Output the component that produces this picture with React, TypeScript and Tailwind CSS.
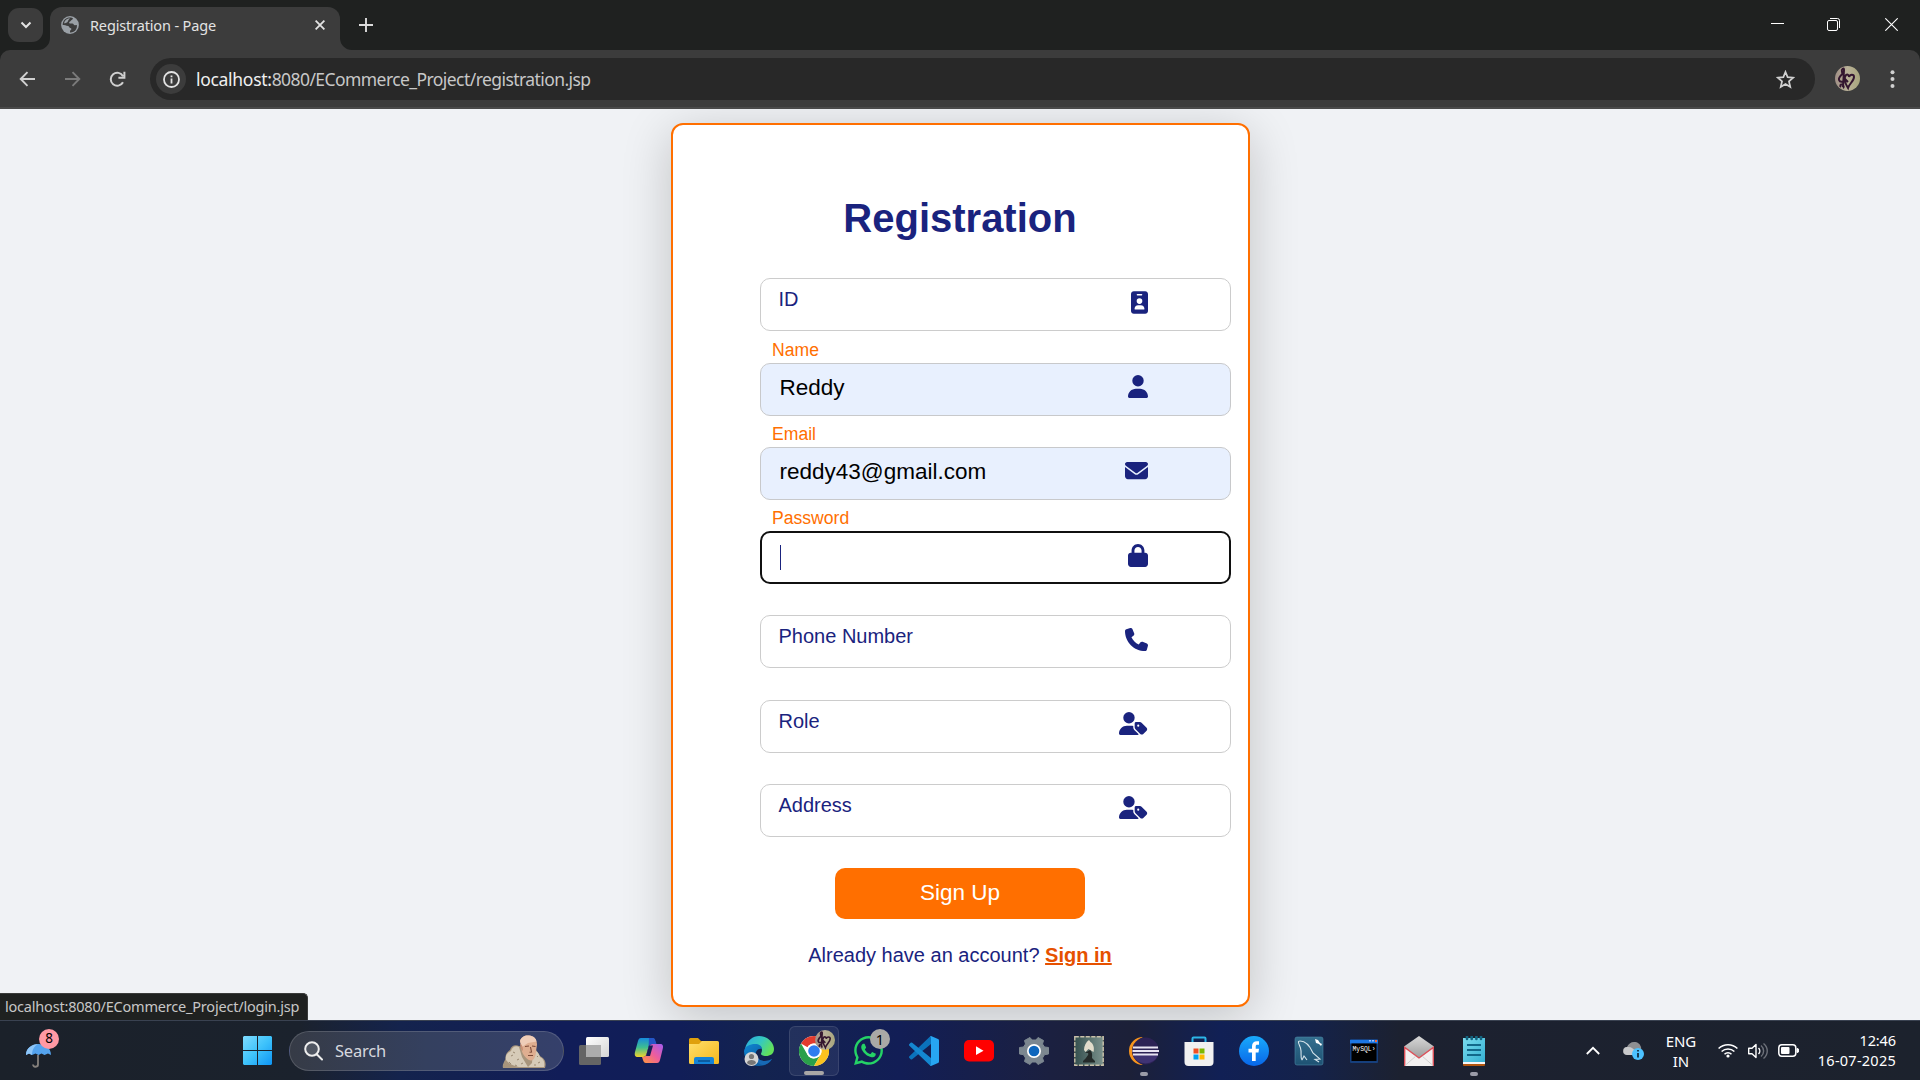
import React from "react";
import { FaIdBadge, FaUser, FaEnvelope, FaLock, FaPhone, FaUserTag, FaWhatsapp } from "react-icons/fa6";

const UI = "font-['Noto_Sans','Open_Sans',sans-serif]";

type Field = { label: string; value?: string; state: "empty" | "filled" | "focus"; Icon: React.ComponentType<{ className?: string }>; iconWidth: string };

const fields: Field[] = [
  { label: "ID", state: "empty", Icon: FaIdBadge, iconWidth: "w-[17px]" },
  { label: "Name", value: "Reddy", state: "filled", Icon: FaUser, iconWidth: "w-[20px]" },
  { label: "Email", value: "reddy43@gmail.com", state: "filled", Icon: FaEnvelope, iconWidth: "w-[23px]" },
  { label: "Password", state: "focus", Icon: FaLock, iconWidth: "w-[20px]" },
  { label: "Phone Number", state: "empty", Icon: FaPhone, iconWidth: "w-[23px]" },
  { label: "Role", state: "empty", Icon: FaUserTag, iconWidth: "w-[28.500px]" },
  { label: "Address", state: "empty", Icon: FaUserTag, iconWidth: "w-[28.500px]" },
];

function TabStrip() {
  return (
    <div className="flex h-[50px] shrink-0 items-start bg-[#1f2120] pl-2">
      <div className="mt-2 flex h-[34px] w-[35px] items-center justify-center rounded-[11px] bg-[#3c3c3c]">
        <svg width="12" height="8" viewBox="0 0 12 8" fill="none" stroke="#e3e3e3" strokeWidth="2"><path d="M1.5 1.5 6 6l4.500-4.500" /></svg>
      </div>
      <div className="relative ml-[7px] mt-[7px] flex h-[43px] w-[290px] items-center rounded-t-[12px] bg-[#3c3c3c] pb-[7px]">
        <svg className="absolute -left-3 bottom-0" width="12" height="12"><path d="M12 0v12H0A12 12 0 0 0 12 0z" fill="#3c3c3c" /></svg>
        <svg className="absolute -right-3 bottom-0" width="12" height="12"><path d="M0 0v12h12A12 12 0 0 1 0 0z" fill="#3c3c3c" /></svg>
        <svg className="ml-[11px]" width="18" height="18" viewBox="0 0 18 18">
          <circle cx="9" cy="9" r="8.900" fill="#9aa0a6" />
          <path d="M8 1.600c2-.3 3 .2 4 .8-.2 1.500-1.800 1-2.200 2.400-.3 1-1.600.6-1.700 1.900 0 .9 2.200.8 3.200.8 1.300 0 1.200 1.700 2.600 1.700l2-.3c.4 3-1 5.600-3.400 6.900-1.300.7-2.400.6-3.500.6.200-1.500-.3-1.900.8-2.500 1-.6.700-1.800-.6-2-1-.1-.8-1.600-2-2C5 9.400 3.500 9 1.700 8.900 1.700 4.800 4.600 2.200 8 1.600z" fill="#3c3c3c" />
          <path d="M3.200 6.200C4.500 3.600 6.600 2.300 9 2.200L7.500 4 6.400 6.300 3.500 7.400z" fill="#9aa0a6" />
        </svg>
        <span className="ml-[11px] mt-[1px] whitespace-nowrap text-[14.500px] tracking-[-0.15px] text-[#e3e3e3]">Registration - Page</span>
        <svg className="absolute left-[265px] top-[13px]" width="10" height="10" stroke="#e3e3e3" strokeWidth="1.800"><path d="M.6.6l8.800 8.800M9.400.6.6 9.400" /></svg>
      </div>
      <svg className="ml-[19px] mt-[18px]" width="14" height="14" stroke="#dcdcdc" strokeWidth="1.900"><path d="M7 0v14M0 7h14" /></svg>
      <div className="ml-auto flex pr-[22px] pt-[18px]">
        <svg width="13" height="13" stroke="#fff"><path d="M0 5.500h13" /></svg>
        <svg className="ml-[43px]" width="13" height="13" fill="none" stroke="#fff"><path d="M.5 4a1.500 1.500 0 0 1 1.500-1.500h7a1.500 1.500 0 0 1 1.500 1.500v7a1.500 1.500 0 0 1-1.500 1.500H2A1.500 1.500 0 0 1 .5 11zM3 .5h7.500a2 2 0 0 1 2 2V10" /></svg>
        <svg className="ml-[45px]" width="13" height="13" stroke="#fff" strokeWidth="1.100"><path d="M.3.300l12.400 12.400M12.700.300.300 12.700" /></svg>
      </div>
    </div>
  );
}

function Toolbar() {
  return (
    <div className="flex h-[59px] shrink-0 bg-[#1f2120]">
      <div className="flex w-full items-start rounded-t-[10px] border-b-2 border-[#4a4a4a] bg-[#3c3c3c] pl-[19px] pt-2">
        <div className="flex h-[42px] items-center">
          <svg width="17" height="16" viewBox="0 0 17 16" fill="none" stroke="#d0d0d0" strokeWidth="1.900"><path d="M16 8H2M8.500 1.200 1.700 8l6.800 6.800" /></svg>
          <svg className="ml-[28px]" width="17" height="16" viewBox="0 0 17 16" fill="none" stroke="#7b7b7b" strokeWidth="1.900"><path d="M1 8h14M8.500 1.200 15.300 8l-6.800 6.800" /></svg>
          <svg className="ml-[28px]" width="17" height="17" viewBox="0 0 17 17" fill="none" stroke="#d0d0d0" strokeWidth="2"><path d="M14 11.300A6.500 6.500 0 1 1 14 5.200M15.400 .8v6H9.400" /></svg>
        </div>
        <div className="ml-6 flex h-[42px] w-[1665px] items-center rounded-full bg-[#282828] pl-[6px] pr-5">
          <div className="flex size-[30px] items-center justify-center rounded-full bg-[#3c3c3c]">
            <svg width="17" height="17" viewBox="0 0 17 17" fill="none" stroke="#e3e3e3" strokeWidth="1.800"><circle cx="8.500" cy="8.500" r="7.500" /><path d="M8.500 7.500v5M8.500 4.400v1.900" /></svg>
          </div>
          <span className="ml-[10px] mt-[1px] whitespace-nowrap text-[17.500px] tracking-[-0.57px] text-[#c7c7c7]"><span className="tracking-[-0.3px] text-[#f0f0f0]">localhost:</span>8080/ECommerce_Project/registration.jsp</span>
          <svg className="ml-auto" width="19" height="19" viewBox="0 0 24 24" fill="none" stroke="#d0d0d0" strokeWidth="2.200"><path d="m12 2.500 2.700 6.600 7 .6-5.300 4.700 1.600 7L12 17.600l-6 3.800 1.600-7L2.300 9.700l7-.6z" /></svg>
        </div>
        <Avatar className="ml-5 mt-[8px]" size={25} />
        <svg className="ml-[30px] mt-[12px]" width="5" height="18" fill="#d0d0d0"><circle cx="2.500" cy="2.200" r="2" /><circle cx="2.500" cy="9" r="2" /><circle cx="2.500" cy="16" r="2" /></svg>
      </div>
    </div>
  );
}

function Avatar({ size, className }: { size: number; className?: string }) {
  return (
    <svg className={className} width={size} height={size} viewBox="0 0 25 25">
      <defs><linearGradient id="av"><stop stopColor="#a08f86" /><stop offset=".5" stopColor="#b9b198" /><stop offset="1" stopColor="#a8a67c" /></linearGradient></defs>
      <circle cx="12.500" cy="12.500" r="12.500" fill="url(#av)" />
      <path d="M6 21c-1.500-1-.5-3 1-2.500 2 .5 2 3 1 3.500M8 21 9 4c.3-3-3-1-2 2 .5 2 3 4 3 7s-5 4-6 1 4-6 5-8M13 22C10 17 8 12 11 9c2-1.500 3 1 3 2 1-3 5-3 5 0 0 4-5 7-6 11zM9 12l4 4" fill="none" stroke="#34162f" strokeWidth="2" />
    </svg>
  );
}

function FormField({ label, value, state, Icon, iconWidth }: Field) {
  const floating = state !== "empty";
  return (
    <div className="relative h-[84.280px] w-[471px]">
      <div
        className={
          "flex h-[53px] rounded-[10px] pl-[19px] pt-[11px] text-[22.500px] leading-[26px] text-black " +
          (state === "focus" ? "border-2 border-[#101010] bg-white" : state === "filled" ? "border border-[#c8c9cb] bg-[#e8f0fe]" : "border border-[#ccc] bg-white")
        }
      >
        {value}
        {state === "focus" && <span className="-ml-px mt-[1px] h-[25px] w-px bg-[#1a237e]" />}
      </div>
      <label className={"absolute whitespace-nowrap " + (floating ? "-top-[23px] left-[12.500px] text-[17.600px] leading-[21px] text-[#ff6f00]" : "left-[19px] top-[10px] text-[20px] leading-[23px] text-[#1a237e]")}>{label}</label>
      <span className="absolute right-[83px] top-[12.500px] text-[#1a237e]">
        <Icon className={"block h-[23px] " + iconWidth} />
      </span>
    </div>
  );
}

function Page() {
  return (
    <main className="relative flex flex-1 items-start justify-center overflow-hidden bg-[#f0f2f5] font-['Liberation_Sans',Arial,sans-serif]">
      <section className="mt-[14px] flex h-[884px] w-[579px] flex-col items-center rounded-[12px] border-2 border-[#ff6f00] bg-white shadow-[0_10px_50px_rgba(0,0,0,0.2)]">
        <h1 className="mt-[70px] text-[40px] font-bold leading-[46px] text-[#1a237e]">Registration</h1>
        <form className="ml-[70px] mt-[37.300px] flex flex-col">
          {fields.map((f) => (
            <FormField key={f.label} {...f} />
          ))}
        </form>
        <button type="button" className="h-[51px] w-[250px] shrink-0 rounded-[10px] bg-[#ff6f00] pb-[1.500px] text-[22.500px] leading-[26px] text-white">Sign Up</button>
        <p className="mt-[25px] text-[20px] leading-[23px] text-[#1a237e]">
          Already have an account? <a className="font-bold text-[#e65100] underline">Sign in</a>
        </p>
      </section>
      <div className={"absolute bottom-0 left-0 flex h-[27px] w-[308px] items-center whitespace-nowrap rounded-tr-[5px] border-r border-t border-[#3a3b3a] bg-[#1f2120] pl-[5px] text-[14.500px] tracking-[-0.2px] text-[#c7c7c7] " + UI}>
        localhost:8080/ECommerce_Project/login.jsp
      </div>
    </main>
  );
}

const TaskView = () => (
  <svg width="30" height="30" viewBox="0 0 30 30">
    <defs><linearGradient id="tv" x2="1" y2="1"><stop stopColor="#fff" /><stop offset="1" stopColor="#d5d5d5" /></linearGradient></defs>
    <rect y="9" width="22" height="20" rx="1.500" fill="#656565" /><rect x="7" y="1" width="23" height="20" rx="1.500" fill="url(#tv)" /><path d="M7 9h15v12H8a1 1 0 0 1-1-1z" fill="#adadad" />
  </svg>
);
const Copilot = () => (
  <svg width="30" height="30" viewBox="0 0 30 30">
    <defs>
      <linearGradient id="c1" x2="0" y2="1"><stop stopColor="#168bdd" /><stop offset=".5" stopColor="#3fbf8f" /><stop offset="1" stopColor="#f2d32b" /></linearGradient>
      <linearGradient id="c2" x1="1" x2="0" y2="1"><stop stopColor="#a45cf0" /><stop offset=".5" stopColor="#ee5d9c" /><stop offset="1" stopColor="#ff9a3c" /></linearGradient>
    </defs>
    <path d="M7 2h11c2 0 2.500 1.500 3 3l1 3h-4c-2 0-3 1-3.500 3l-2 7c-.6 2-1.500 3-3.500 3H4c-3 0-3.700-2-3-5L4 5c.6-2 1.300-3 3-3z" fill="url(#c1)" />
    <path d="M23 27H12c-2 0-2.500-1.500-3-3l-1-3c3 0 4-1 4.600-3l2.200-7c.6-2 1.500-3 3.500-3H26c3 0 3.500 2 2.700 5L26 24c-.6 2-1.300 3-3 3z" fill="url(#c2)" />
    <path d="M15 2h4c1.500 0 2 1 2.500 3l1 3h-4c-2 0-3 1-4 3z" fill="#2455c7" />
    <path d="M15 9.500h4l-3 10.500h-4z" fill="#142058" />
  </svg>
);
const Folder = () => (
  <svg width="30" height="30" viewBox="0 0 30 30">
    <defs><linearGradient id="fo" x2="1" y2="1"><stop stopColor="#ffdf6b" /><stop offset="1" stopColor="#f5b81c" /></linearGradient></defs>
    <path d="M0 3.500A1.500 1.500 0 0 1 1.500 2H9l3 3h16v8H0z" fill="#dfa00c" /><path d="M0 8h10l3-3h15.500A1.500 1.500 0 0 1 30 6.500v20a1.500 1.500 0 0 1-1.500 1.500h-27A1.500 1.500 0 0 1 0 26.500z" fill="url(#fo)" />
    <path d="M5 28v-5a2 2 0 0 1 2-2h16a2 2 0 0 1 2 2v5z" fill="#1483d8" /><path d="M9 25h12" stroke="#0a4f8e" strokeWidth="1.500" />
  </svg>
);
const Edge = () => (
  <svg width="30" height="30" viewBox="0 0 30 30">
    <defs>
      <linearGradient id="e1" x2="1" y2=".5"><stop stopColor="#2aa7e0" /><stop offset=".55" stopColor="#35c9c0" /><stop offset="1" stopColor="#62e05a" /></linearGradient>
      <linearGradient id="e2" x2="1" y2="1"><stop stopColor="#0f86d2" /><stop offset="1" stopColor="#0b4e92" /></linearGradient>
    </defs>
    <path d="M1 13C3 4 9 0 15 0c9 0 15 7 15 13 0 5-4 7-8 7-3 0-5-1-5-2s1-2 1-4c0-3-3-5-7-5-5 0-8 2-10 4z" fill="url(#e1)" />
    <path d="M0 15C1 10 6 8 11 8c4 0 7 2 7 5-2-1-5 0-6 3-1 5 3 9 9 9 3 0 5-1 7-2-3 5-8 7-13 7C6 30 0 23 0 15z" fill="url(#e2)" />
    <path d="M12 16c-1 5 3 9 9 9 3 0 5-1 7-2-2 3-4 5-8 6-6 0-11-6-8-13z" fill="#1769b5" />
    <circle cx="7.500" cy="23" r="7" fill="#d5d5d5" /><circle cx="7.500" cy="20.500" r="2.600" fill="#777" /><path d="M3 27c0-4 9-4 9 0-2 2.500-7 2.500-9 0z" fill="#777" />
  </svg>
);
const Chrome = () => (
  <div className="relative">
    <svg width="30" height="30" viewBox="0 0 30 30">
      <circle cx="15" cy="15" r="15" fill="#fff" />
      <path d="M15 0a15 15 0 0 1 13 7.500H15a7.500 7.500 0 0 0-6.500 3.750L2 7.500A15 15 0 0 1 15 0z" fill="#e23b2e" />
      <path d="M2 7.500 8.500 18.750A7.500 7.500 0 0 0 15 22.500l6.500-3.750L15 30A15 15 0 0 1 2 7.500z" fill="#2aa04a" />
      <path d="M28 7.500A15 15 0 0 1 15 30l6.500-11.250a7.500 7.500 0 0 0 0-7.500L15 7.500z" fill="#fcc31e" />
      <circle cx="15" cy="15" r="7.500" fill="#fff" /><circle cx="15" cy="15" r="5.800" fill="#2f7cf0" />
    </svg>
    <Avatar className="absolute -right-[6px] -top-[6px]" size={20} />
  </div>
);
const WhatsApp = () => (
  <div className="relative">
    <FaWhatsapp size={33} color="#25d366" />
    <span className={"absolute -right-[5px] -top-[5px] flex size-[20px] items-center justify-center rounded-full bg-[#aaa9a6] text-[14.500px] leading-none text-black " + UI}>1</span>
  </div>
);
const VSCode = () => (
  <svg width="30" height="30" viewBox="0 0 30 30">
    <path d="M22 0v8L3.200 23.200a1.300 1.300 0 0 1-1.600 0L.4 22a1.200 1.200 0 0 1 0-1.800L20.500 1z" fill="#0b72bb" />
    <path d="M22 30v-8L3.200 6.800a1.300 1.300 0 0 0-1.600 0L.4 8a1.200 1.200 0 0 0 0 1.800L20.500 29z" fill="#1487d0" />
    <path d="M22 0l7 3a1.600 1.600 0 0 1 1 1.500v21a1.600 1.600 0 0 1-1 1.500l-7 3-1.500-1c1 .5 1.500 0 1.500-1.500v-25C22 1 21.500.5 20.500 1z" fill="#27a6f2" />
  </svg>
);
const YouTube = () => (
  <svg width="30" height="30" viewBox="0 0 30 30"><rect y="4" width="30" height="21.500" rx="5" fill="#f00" /><path d="M12 10.300v8.800l7.500-4.400z" fill="#fff" /></svg>
);
const Settings = () => (
  <svg width="30" height="30" viewBox="0 0 30 30">
    <path d="M11 1.500 13 4h4l2-2.500 5.500 3-1 3.500 2 3 4 .5v6.500l-4 .7-2 3.300 1.200 3.500-5.700 3L17 26h-4l-2 2.500-5.500-3L6.500 22l-2-3.300L.5 18v-6.500l4-.5 2-3-1-3.500z" fill="#7c8790" stroke="#7c8790" strokeLinejoin="round" />
    <circle cx="15" cy="15" r="7" fill="#fff" /><circle cx="15" cy="15" r="5.300" fill="#0e66bd" />
  </svg>
);
const Chess = () => (
  <svg width="30" height="30" viewBox="0 0 30 30">
    <defs><linearGradient id="ch" x2="1"><stop stopColor="#35504f" /><stop offset="1" stopColor="#7b918c" /></linearGradient></defs>
    <rect width="30" height="30" fill="#4a4a42" /><rect x=".8" y=".8" width="28.400" height="28.400" fill="url(#ch)" stroke="#c9c1ab" strokeWidth="1.400" strokeDasharray="4 1.500" />
    <path d="M10 14c0-4 2-8 5-10l1.500 2c3 2 4 6 3 10l-5-3-3 3z" fill="#e2dccb" /><path d="M11 17l5-3c3 3 2 6 2 8l3 3v1.500H9V25l3-3c1-2 3-3 2-5z" fill="#242a29" />
  </svg>
);
const Eclipse = () => (
  <svg width="30" height="30" viewBox="0 0 30 30">
    <path d="M14 1A14 14 0 1 0 14 29 15 15 0 0 1 14 1z" fill="#f7941e" /><circle cx="16.500" cy="15" r="13.500" fill="#2c2255" /><path d="M4 19h25a13.500 13.500 0 0 1-25 0z" fill="#3f3373" />
    <path d="M4 11.500h25M3.500 15h26.500M4 18.500h25" stroke="#e8e4f2" strokeWidth="2" />
  </svg>
);
const Store = () => (
  <svg width="30" height="30" viewBox="0 0 30 30">
    <path d="M8.500 8V2.500a1 1 0 0 1 1-1h11a1 1 0 0 1 1 1V8" fill="none" stroke="#2cb5e8" strokeWidth="2" /><path d="M.5 6h29v20a4 4 0 0 1-4 4h-21a4 4 0 0 1-4-4z" fill="#f1f1f1" />
    <path d="M9.500 12.500h5v5h-5z" fill="#f05023" /><path d="M15.500 12.500h5v5h-5z" fill="#7cb800" /><path d="M9.500 18.500h5v5h-5z" fill="#00a1f1" /><path d="M15.500 18.500h5v5h-5z" fill="#fdb900" />
  </svg>
);
const Facebook = () => (
  <svg width="30" height="30" viewBox="0 0 30 30">
    <defs><linearGradient id="fb" x2="0" y2="1"><stop stopColor="#19aafc" /><stop offset="1" stopColor="#0866e8" /></linearGradient></defs>
    <circle cx="15" cy="15" r="15" fill="url(#fb)" /><path d="M13 25v-8.500H9.500v-3.700H13v-2.500C13 7 15 5.300 18 5.300h2v3.400h-1.700c-1.300 0-1.600.7-1.600 1.700v2.400H20l-.5 3.700h-2.800V25z" fill="#fff" />
  </svg>
);
const Workbench = () => (
  <svg width="30" height="30" viewBox="0 0 30 30">
    <defs><linearGradient id="wb" x2="0" y2="1"><stop stopColor="#34708f" /><stop offset="1" stopColor="#1e5273" /></linearGradient></defs>
    <rect x="1" y="1" width="28" height="28" rx="2" fill="url(#wb)" stroke="#4b87a5" strokeWidth=".6" />
    <path d="M8 24C6 21 8 17 6.500 12 5 8 3 5 6 5c6 0 10 5 13 12l7 6-5 .5 4 2.500M8 24l2-4 3 4" fill="none" stroke="#d5e4eb" strokeWidth="1.100" /><path d="m21 3 3 1 2 3 2 1-1 2-2-2-3-1z" fill="#fff" />
  </svg>
);
const MySql = () => (
  <svg width="30" height="30" viewBox="0 0 30 30">
    <rect x="1" y="3" width="28" height="24" rx="1" fill="#163f7c" /><path d="M1 4h28v3.500H1z" fill="#1c77e4" /><path d="M20 4.700h2M23 4.700h2" stroke="#9cc4ff" strokeWidth="1.500" /><path d="M26 5h2" stroke="#f26b3a" strokeWidth="2" /><path d="M2.500 7.500h25V25h-25z" />
    <text x="3.500" y="15" fontSize="6.800" fill="#fff" fontFamily="Liberation Mono" textLength="23" lengthAdjust="spacingAndGlyphs">MySQL›</text>
  </svg>
);
const Mail = () => (
  <svg width="30" height="30" viewBox="0 0 30 30">
    <defs><linearGradient id="ml" x2="0" y2="1"><stop stopColor="#d8d8d8" /><stop offset="1" stopColor="#9b9b9b" /></linearGradient></defs>
    <path d="M0 10.500 15 0l15 10.500V14L15 23 0 14z" fill="url(#ml)" /><path d="M0 11v19h30V11L15 22z" fill="#f2f0f0" /><path d="M.7 30V11.500L15 22l14.300-10.500V30" fill="none" stroke="#dd5059" strokeWidth="1.400" /><path d="M1 29.500 12 20M29 29.500 18 20" stroke="#cfcfcf" />
  </svg>
);
const Notepad = () => (
  <svg width="30" height="30" viewBox="0 0 30 30">
    <defs><linearGradient id="np" x2="1" y2="1"><stop stopColor="#7adcee" /><stop offset="1" stopColor="#34b0d2" /></linearGradient></defs>
    <path d="M4 26h22v3a1 1 0 0 1-1 1H5a1 1 0 0 1-1-1z" fill="#b3560f" /><path d="M4 2h22v24H4z" fill="url(#np)" /><path d="M4 26h22v2H4z" fill="#f6f6f6" />
    <path d="M8 0v3M12.700 0v3M17.400 0v3M22 0v3" stroke="#13647f" strokeWidth="2.600" strokeLinecap="round" /><path d="M8 9h14M8 14h14M8 19h14" stroke="#12688a" strokeWidth="1.800" />
  </svg>
);

const apps: { name: string; Icon: () => React.ReactElement; active?: boolean; running?: boolean }[] = [
  { name: "Task view", Icon: TaskView },
  { name: "Copilot", Icon: Copilot },
  { name: "Explorer", Icon: Folder },
  { name: "Edge", Icon: Edge },
  { name: "Chrome", Icon: Chrome, active: true },
  { name: "WhatsApp", Icon: WhatsApp },
  { name: "VS Code", Icon: VSCode },
  { name: "YouTube", Icon: YouTube },
  { name: "Settings", Icon: Settings },
  { name: "Chess", Icon: Chess },
  { name: "Eclipse", Icon: Eclipse, running: true },
  { name: "Store", Icon: Store },
  { name: "Facebook", Icon: Facebook },
  { name: "Workbench", Icon: Workbench },
  { name: "MySQL", Icon: MySql },
  { name: "Mail", Icon: Mail },
  { name: "Notepad", Icon: Notepad, running: true },
];

function SearchPortrait() {
  return (
    <svg width="44" height="33" viewBox="0 0 44 33">
      <path d="M1 33c-1-3 1-6 2.500-9C3 20 5 17 8 15c1-4 5-6 9-4l14 3c4 0 5 4 7 7 4 2 7 6 5 12z" fill="#a8957c" />
      <path d="M4 25c-1-4 1-7 5-9 1-4 5-6 8-4l3 10 6 10-9 0C12 31 7 29 4 25zM31 16c4-1 6 3 7 6 4 2 5 6 4 10H26l4-4z" fill="#d6cbb8" />
      <path d="M9 21l2-1M11 17l2 1M15 25l2-1M19 29l2-1M35 22l1-1M36 28l2-1M32 30l2 0M7 27l2 2M13 30l2 1" stroke="#9b8a73" strokeWidth="1" />
      <path d="M18 6c1-4 5-6 9-5.500 5 .5 8 4 8 9l-1 7c0 4-2 9-5 9-3 0-8-5-9-9z" fill="#dfae90" />
      <path d="M18 6c1-4 5-6 9-5.500 5 .5 7 3 7.500 6L26 8l-6 4z" fill="#efcdb8" />
      <path d="M23 11.500l4-.5M30 11l3.500.500M28.500 12l1 5-2 .3M26 20.500h5" stroke="#7c4a38" strokeWidth="1.100" fill="none" />
      <path d="M18 9c2 0 3 3 3 7l-2-2z" fill="#c98f74" />
    </svg>
  );
}

function Taskbar() {
  return (
    <footer className={"flex h-[60px] shrink-0 items-center border-t border-[#3a4251] bg-[linear-gradient(90deg,#1b212a_0px,#1b222d_300px,#14234d_400px,#111d58_560px,#111e58_680px,#13234f_760px,#121e56_900px,#1b2040_1050px,#1c2038_1130px,#112055_1220px,#14224a_1310px,#1c2130_1400px,#1c222d_1920px)] text-white " + UI}>
      <div className="relative -mt-[3px] ml-[26px] h-[40px] w-[33px]">
        <svg className="absolute left-0 top-[14px]" width="25" height="25" viewBox="0 0 25 25">
          <path d="M9 12v9a2.500 2.500 0 0 1-5 .500" transform="translate(3)" fill="none" stroke="#85807c" strokeWidth="1.800" />
          <path d="M0 12C0 5 6 1 12.500 1S25 5 25 12l-3-1.500-3.500 1.500-3-1.500-3 1.500-3-1.500L6 12l-3-1.500z" fill="#54a3ee" /><path d="M0 12C0 5 6 1 12.500 1 8 3 6 7 6 12l-3-1.500z" fill="#8ec6f8" />
        </svg>
        <span className="absolute right-0 top-0 flex size-[20px] items-center justify-center rounded-full bg-[#ff99a4] text-[13.500px] leading-none text-black">8</span>
      </div>
      <svg className="ml-[184px]" width="29" height="29" viewBox="0 0 29 29">
        <defs><linearGradient id="win" x2="1" y2="1"><stop stopColor="#7fdcff" /><stop offset=".5" stopColor="#3fc3fb" /><stop offset="1" stopColor="#0e95f5" /></linearGradient></defs>
        <path d="M1 0h13v14H0V1zM15 0h13l1 1v13H15zM0 15h14v14H1l-1-1zM15 15h14v13l-1 1H15z" fill="url(#win)" />
      </svg>
      <div className="ml-[17px] flex h-[40px] w-[275px] items-center rounded-full border border-white/15 bg-[linear-gradient(90deg,#363b46,#34405f_50%,#35406b)] pl-[14px] pr-[17px]">
        <svg width="19" height="20" viewBox="0 0 19 20" fill="none" stroke="#eee" strokeWidth="2"><circle cx="8" cy="8" r="6.800" fill="#ffffff22" /><path d="m13 13.500 5 5" strokeLinecap="round" /></svg>
        <span className="ml-[12px] mt-[1px] text-[16.500px] tracking-[-0.200px] text-[#d6d8df]">Search</span>
        <div className="ml-auto mb-[-1px]"><SearchPortrait /></div>
      </div>
      <div className="ml-[2px] flex h-full items-center">
        {apps.map(({ name, Icon, active, running }) => (
          <div key={name} className="flex w-[55px] justify-center">
            <div className={"relative flex size-[50px] items-center justify-center rounded-[6px] " + (active ? "border border-white/10 bg-white/[0.07]" : "")}>
              <Icon />
              {active && <span className="absolute bottom-0 h-1 w-5 rounded-full bg-[#a9a7a6]" />}
              {running && <span className="absolute bottom-0 h-1 w-2 rounded-full bg-[#9a9ba8]" />}
            </div>
          </div>
        ))}
      </div>
      <div className="ml-auto flex items-center pr-[24px]">
        <svg width="14" height="9" viewBox="0 0 14 9" fill="none" stroke="#fff" strokeWidth="1.800"><path d="m.8 8 6.200-6.200L13.200 8" /></svg>
        <svg className="ml-[23px]" width="21" height="18" viewBox="0 0 21 18">
          <path d="M4 13a4 4 0 0 1 0-8c1-3 4-5 7-5 4 0 6 2 7 5l1 8z" fill="#8e8f92" /><path d="M4 13a4 4 0 1 1 1-8c4 0 6 2 8 5l-2 3z" fill="#c8c9cb" />
          <circle cx="15" cy="12" r="6" fill="#4cc2ff" /><path d="M15 8v1.600M15 11v4.500" stroke="#0b1c2a" strokeWidth="1.600" />
        </svg>
        <div className="ml-[21px] w-[32px] text-center text-[15px] leading-[20px] tracking-[-0.1px]">ENG<br />IN</div>
        <svg className="ml-[21px]" width="20" height="15" viewBox="0 0 20 15" fill="none" stroke="#fff" strokeWidth="1.500"><path d="M.6 5.500a13.400 13.400 0 0 1 18.800 0M3.600 8.500a9.200 9.200 0 0 1 12.800 0M6.500 11.300a5 5 0 0 1 7 0" /><circle cx="10" cy="13" r="1.600" fill="#fff" stroke="none" /></svg>
        <svg className="ml-[10px]" width="20" height="16" viewBox="0 0 20 16" fill="none" stroke="#fff" strokeWidth="1.400"><path d="M.7 5.200H4L8 1.500v13L4 10.800H.7z" strokeLinejoin="round" /><path d="M10.500 5c1.700 1.700 1.700 4.300 0 6" /><path d="M13 2.500c3.500 3 3.500 8 0 11M15.500.5c5 4 5 11 0 15" stroke="#6c7079" /></svg>
        <svg className="ml-[10px]" width="21" height="13" viewBox="0 0 21 13"><rect x=".8" y=".8" width="17" height="11.400" rx="3" fill="none" stroke="#fff" strokeWidth="1.500" /><rect x="3" y="3" width="8.500" height="7" rx="1" fill="#fff" /><path d="M19 4.500a2 2 0 0 1 0 4z" fill="#fff" stroke="#fff" /></svg>
        <div className="-mt-[2px] ml-[19px] flex w-[78px] flex-col items-end whitespace-nowrap text-[14.500px] leading-[20px]"><span className="tracking-[-0.1px]">12:46</span><span className="tracking-[0.25px]">16-07-2025</span></div>
      </div>
    </footer>
  );
}

export default function App() {
  return (
    <div className={"flex h-[1080px] w-[1920px] flex-col overflow-hidden " + UI}>
      <TabStrip />
      <Toolbar />
      <Page />
      <Taskbar />
    </div>
  );
}
